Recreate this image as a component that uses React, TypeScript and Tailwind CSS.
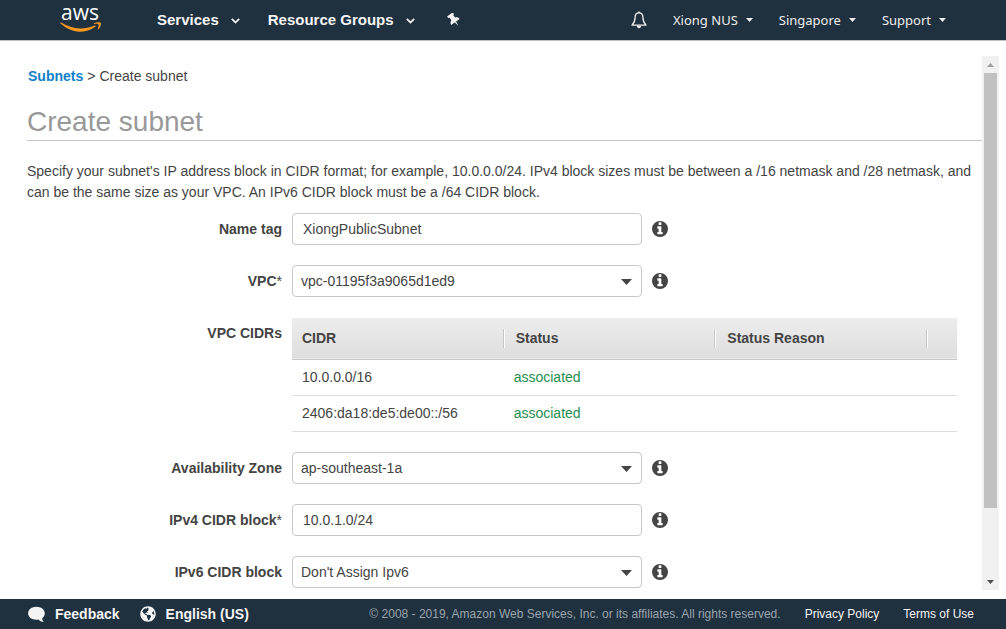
import type { ReactNode } from "react";
import { FaGlobeAmericas } from "react-icons/fa";

function Logo() {
  return (
    <a href="#home" aria-label="aws" className="flex w-[42px] flex-col items-start pb-[7px]">
      <span className="pl-px font-['Open_Sans',sans-serif] text-[21px] leading-6 font-medium text-white">aws</span>
      <svg viewBox="0 0 42 11" className="-mt-0.5 h-[11px] w-[42px]" aria-hidden="true">
        <path d="M.4 1.300c-.4-.6.2-1.100.8-.7C7 4.300 13.600 6.400 20.400 6.400c4.600 0 9.600-1 14.200-2.900.9-.3 1.500.6.700 1.200C31 8 25 9.700 19.800 9.700 12.400 9.700 5.700 6.200.4 1.300z" fill="#f7981f" />
        <path d="M38.400 2.200c-.6-.6-3-.3-4.300-.1-.5 0-.5-.5-.1-.8 2.400-1.600 6.300-1.200 6.800-.7.5.7-.1 4.700-2.400 6.700-.4.300-.8.100-.6-.4.500-1.300 1.200-4.100.6-4.700z" fill="#f7981f" />
      </svg>
    </a>
  );
}

function Chevron() {
  return (
    <svg viewBox="0 0 9 6" className="mt-0.5 h-[6px] w-[9px]" aria-hidden="true">
      <path d="M.8.900 4.500 4.400 8.200.900" fill="none" stroke="#eee" strokeWidth="1.800" />
    </svg>
  );
}

function Caret({ className }: { className: string }) {
  return (
    <svg viewBox="0 0 10 5" className={className} preserveAspectRatio="none" aria-hidden="true">
      <path d="M0 0h10L5 5z" fill="currentColor" />
    </svg>
  );
}

function Bell() {
  return (
    <svg viewBox="0 0 16 18" className="h-[18px] w-4" aria-hidden="true">
      <path d="M8 1.800C5.400 1.800 4.100 3.700 4.100 6.300c0 4-.9 5.700-3.100 7.900h14c-2.200-2.200-3.100-3.900-3.100-7.900C11.900 3.700 10.600 1.800 8 1.800z" fill="none" stroke="#eee" strokeWidth="1.300" strokeLinejoin="round" />
      <path d="M7.200.400h1.600v1.500H7.200zM5.700 14.800h4.600C10.200 16.200 9.200 17.200 8 17.200s-2.200-1-2.300-2.400z" fill="#eee" />
    </svg>
  );
}

function Pin() {
  return (
    <svg viewBox="0 0 14 14" className="size-3.5" aria-hidden="true">
      <g transform="rotate(-36 7 7)" fill="currentColor">
        <path d="M3.500 0h7v2L9.300 2.700v3c1.800.6 2.800 1.900 2.900 3.700H1.800C1.900 7.600 2.900 6.300 4.700 5.700v-3L3.500 2z" />
        <path d="M6.200 9.400h1.600L7.100 14.200z" />
      </g>
    </svg>
  );
}

function SpeechBubble() {
  return (
    <svg viewBox="0 0 17 17" className="size-[17px]" aria-hidden="true">
      <path d="M8.400.8C13 .8 16.800 3.600 16.800 7.300c0 2-1 3.700-2.600 4.900 0 1.500.6 2.700 1.600 3.900-2.300-.2-4-1-5.300-2.500-.7.100-1.400.2-2.100.2C3.800 13.800.1 11 .1 7.300S3.800.8 8.400.8z" fill="currentColor" />
    </svg>
  );
}

function InfoIcon() {
  return (
    <svg viewBox="0 0 1536 1536" className="size-4" aria-hidden="true">
      <path
        fill="currentColor"
        fillRule="evenodd"
        d="M768 0a768 768 0 1 0 0 1536a768 768 0 1 0 0-1536zM1024 1248q0 32-32 32H544q-32 0-32-32v-160q0-32 32-32h96V736h-96q-32 0-32-32V544q0-32 32-32h320q32 0 32 32v512h96q32 0 32 32zM896 352q0 32-32 32H672q-32 0-32-32V160q0-32 32-32h192q32 0 32 32z"
      />
    </svg>
  );
}

function TopMenu({ children }: { children: ReactNode }) {
  return (
    <button type="button" className="flex items-center gap-3 text-[15px] font-bold whitespace-nowrap text-[#f4f4f4]">
      {children}
      <Chevron />
    </button>
  );
}

function AccountMenu({ children }: { children: ReactNode }) {
  return (
    <button type="button" className="flex items-center gap-2 font-['Noto_Sans',sans-serif] text-[13px] whitespace-nowrap text-[#eee]">
      {children}
      <Caret className="h-1 w-[7px]" />
    </button>
  );
}

function Row({ label, id, required, children }: { label: string; id: string; required?: boolean; children: ReactNode }) {
  return (
    <div className="flex items-center gap-2.5">
      <label htmlFor={id} className="w-[255px] shrink-0 text-right font-bold">
        {label}
        {required && <span className="font-normal">*</span>}
      </label>
      {children}
      <button type="button" aria-label={`About ${label}`}>
        <InfoIcon />
      </button>
    </div>
  );
}

function TextField({ label, id, value, required }: { label: string; id: string; value: string; required?: boolean }) {
  return (
    <Row label={label} id={id} required={required}>
      <input id={id} type="text" defaultValue={value} className="h-8 w-full max-w-[350px] rounded border border-[#c8c8c8] bg-white px-2.5" />
    </Row>
  );
}

function SelectField({ label, id, value, required }: { label: string; id: string; value: string; required?: boolean }) {
  return (
    <Row label={label} id={id} required={required}>
      <div className="relative w-full max-w-[350px]">
        <select id={id} defaultValue={value} className="block h-8 w-full appearance-none rounded border border-[#c8c8c8] bg-white px-2">
          <option>{value}</option>
        </select>
        <Caret className="pointer-events-none absolute top-3.5 right-2.5 h-1.5 w-[11px]" />
      </div>
    </Row>
  );
}

const cidrs = ["10.0.0.0/16", "2406:da18:de5:de00::/56"];

function HeadCell({ children }: { children: ReactNode }) {
  return (
    <th className="p-0 text-left">
      <div className="flex h-[19px] items-center border-r border-[#c6c6c6] pl-3 shadow-[1px_0_0_#fff]">{children}</div>
    </th>
  );
}

function CidrTable() {
  return (
    <div className="flex gap-2.5 pt-px">
      <div id="cidrs-label" className="w-[255px] shrink-0 pt-[5px] text-right font-bold">VPC CIDRs</div>
      <div className="min-w-0 flex-1 pr-[25px]">
        <table aria-labelledby="cidrs-label" className="w-full table-fixed border-collapse">
          <colgroup>
            <col />
            <col />
            <col />
            <col className="w-[30px]" />
          </colgroup>
          <thead>
            <tr className="h-[41px] border-b border-[#c6c6c6] bg-linear-to-b from-[#ededed] to-[#dedede]">
              <th className="p-0 text-left">
                <div className="flex h-[19px] items-center border-r border-[#c6c6c6] pl-2.5 shadow-[1px_0_0_#fff]">CIDR</div>
              </th>
              <HeadCell>Status</HeadCell>
              <HeadCell>Status Reason</HeadCell>
              <td />
            </tr>
          </thead>
          <tbody>
            {cidrs.map((cidr) => (
              <tr key={cidr} className="h-9 border-b border-[#ddd]">
                <td className="p-0 pl-2.5">{cidr}</td>
                <td className="p-0 pl-2.5 text-[#1e8e4e]">associated</td>
                <td />
                <td />
              </tr>
            ))}
          </tbody>
        </table>
      </div>
    </div>
  );
}

function ScrollBar() {
  return (
    <div className="flex w-[17px] shrink-0 flex-col bg-[#f1f1f1]">
      <button type="button" aria-label="Scroll up" className="flex h-[17px] items-center justify-center text-[#a0a0a0]">
        <Caret className="h-1 w-[7px] rotate-180" />
      </button>
      <div className="flex-1">
        <div className="mx-auto h-[87%] w-[13px] bg-[#c1c1c1]" />
      </div>
      <button type="button" aria-label="Scroll down" className="flex h-[17px] items-center justify-center text-[#505050]">
        <Caret className="h-1 w-[7px]" />
      </button>
    </div>
  );
}

export default function App() {
  return (
    <div className="flex h-screen flex-col bg-white font-['Liberation_Sans',Arial,sans-serif] text-sm text-[#444]">
      <header className="flex h-[41px] shrink-0 items-center justify-between border-b border-[#c0c4c8] bg-[#1f303f] px-[60px]">
        <nav className="flex items-center">
          <Logo />
          <div className="ml-[55px] flex items-center gap-7">
            <TopMenu>Services</TopMenu>
            <TopMenu>Resource Groups</TopMenu>
          </div>
          <button type="button" aria-label="Pin shortcuts" className="ml-8 text-[#f4f4f4]">
            <Pin />
          </button>
        </nav>
        <div className="flex items-center gap-[26px]">
          <button type="button" aria-label="Notifications">
            <Bell />
          </button>
          <AccountMenu>Xiong NUS</AccountMenu>
          <AccountMenu>Singapore</AccountMenu>
          <AccountMenu>Support</AccountMenu>
        </div>
      </header>

      <div className="flex min-h-0 flex-1 pt-[15px] pr-[7px] pb-[9px] pl-[27px]">
        <main className="min-w-0 flex-1 overflow-hidden">
          <nav className="flex gap-1 pt-2.5 pl-px">
            <a href="#subnets" className="font-bold text-[#1081c9]">Subnets</a>
            <span>&gt;</span>
            <span>Create subnet</span>
          </nav>
          <h1 className="mt-[18px] border-b border-[#c6c6c6] text-[28px] leading-9 text-[#999]">Create subnet</h1>
          <p className="mt-5 leading-[21px]">
            Specify your subnet's IP address block in CIDR format; for example, 10.0.0.0/24. IPv4 block sizes must be between a /16 netmask and /28 netmask, and can be the same size as your VPC. An IPv6 CIDR block must be a /64 CIDR block.
          </p>
          <form className="mt-2.5 flex flex-col gap-5">
            <TextField label="Name tag" id="name" value="XiongPublicSubnet" />
            <SelectField label="VPC" id="vpc" value="vpc-01195f3a9065d1ed9" required />
            <CidrTable />
            <SelectField label="Availability Zone" id="zone" value="ap-southeast-1a" />
            <TextField label="IPv4 CIDR block" id="ipv4" value="10.0.1.0/24" required />
            <SelectField label="IPv6 CIDR block" id="ipv6" value="Don't Assign Ipv6" />
          </form>
        </main>
        <ScrollBar />
      </div>

      <footer className="flex h-[30px] shrink-0 items-center justify-between bg-[#1f303f] pr-8 pl-7 whitespace-nowrap text-[#f4f4f4]">
        <div className="flex items-center gap-5 font-bold">
          <button type="button" className="flex items-center gap-2.5">
            <SpeechBubble />
            Feedback
          </button>
          <button type="button" className="flex items-center gap-2.5">
            <FaGlobeAmericas className="size-4" />
            English (US)
          </button>
        </div>
        <div className="flex items-center gap-6 text-xs">
          <span className="text-[#9ba5ad]">© 2008 - 2019, Amazon Web Services, Inc. or its affiliates. All rights reserved.</span>
          <a href="#privacy">Privacy Policy</a>
          <a href="#terms">Terms of Use</a>
        </div>
      </footer>
    </div>
  );
}
